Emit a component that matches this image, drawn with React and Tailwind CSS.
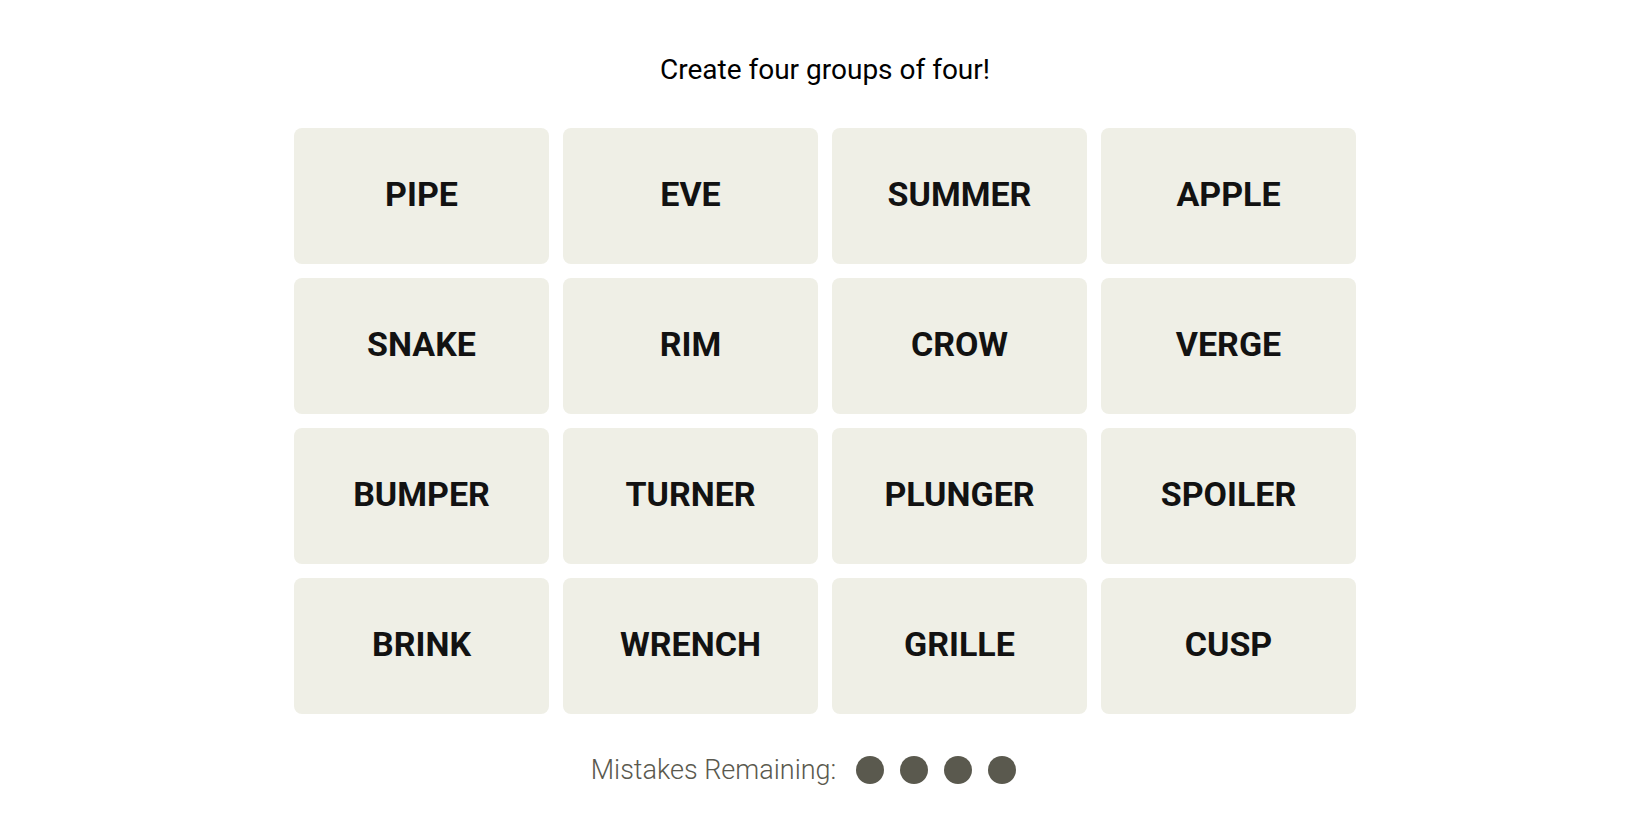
import React from "react";

const words = [
  "PIPE", "EVE", "SUMMER", "APPLE",
  "SNAKE", "RIM", "CROW", "VERGE",
  "BUMPER", "TURNER", "PLUNGER", "SPOILER",
  "BRINK", "WRENCH", "GRILLE", "CUSP",
];

const App = () => {
  return (
    <div className="min-h-screen bg-white flex flex-col items-center pt-[55px] font-['Roboto',sans-serif]">
      <h1 className="text-[28px] leading-[30px] text-black">Create four groups of four!</h1>
      <div className="mt-[43px] grid grid-cols-[repeat(4,255px)] gap-[14px]">
        {words.map((word) => (
          <button
            key={word}
            className="h-[136px] pb-[4px] rounded-[8px] bg-[#efefe6] flex items-center justify-center text-[34px] font-bold text-[#121212]"
          >
            {word}
          </button>
        ))}
      </div>
      <div className="mt-[42px] flex items-center pr-[43px]">
        <span className="text-[27px] leading-[28px] font-light text-[#5a594e] mr-[20px]">Mistakes Remaining:</span>
        <div className="flex items-center gap-[16px]">
          <span className="w-[28px] h-[28px] rounded-full bg-[#5a594e]" />
          <span className="w-[28px] h-[28px] rounded-full bg-[#5a594e]" />
          <span className="w-[28px] h-[28px] rounded-full bg-[#5a594e]" />
          <span className="w-[28px] h-[28px] rounded-full bg-[#5a594e]" />
        </div>
      </div>
    </div>
  );
};

export default App;
